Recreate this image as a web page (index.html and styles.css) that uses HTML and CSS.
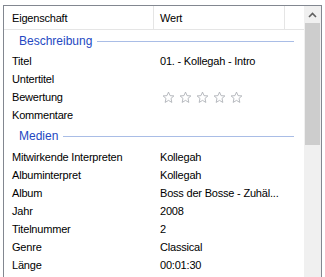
FILE: index.html
```html
<!DOCTYPE html>
<html lang="de">
<head>
  <meta charset="UTF-8">
  <title>Eigenschaften</title>
  <link rel="stylesheet" href="styles.css">
</head>
<body>
  <div class="list">
    <div class="content">
      <div class="header">
        <div class="col-name">Eigenschaft</div>
        <div class="col-value">Wert</div>
        <div class="col-rest"></div>
      </div>

      <div class="group first"><span>Beschreibung</span><i></i></div>
      <div class="row"><div class="name">Titel</div><div class="value">01. - Kollegah - Intro</div></div>
      <div class="row"><div class="name">Untertitel</div><div class="value"></div></div>
      <div class="row">
        <div class="name">Bewertung</div>
        <div class="value stars">
          <svg viewBox="0 0 14 14"><path d="M7 1.2 8.7 5 12.8 5.3 9.7 8 10.6 12.3 7 10.1 3.4 12.3 4.3 8 1.2 5.3 5.3 5Z"/></svg>
          <svg viewBox="0 0 14 14"><path d="M7 1.2 8.7 5 12.8 5.3 9.7 8 10.6 12.3 7 10.1 3.4 12.3 4.3 8 1.2 5.3 5.3 5Z"/></svg>
          <svg viewBox="0 0 14 14"><path d="M7 1.2 8.7 5 12.8 5.3 9.7 8 10.6 12.3 7 10.1 3.4 12.3 4.3 8 1.2 5.3 5.3 5Z"/></svg>
          <svg viewBox="0 0 14 14"><path d="M7 1.2 8.7 5 12.8 5.3 9.7 8 10.6 12.3 7 10.1 3.4 12.3 4.3 8 1.2 5.3 5.3 5Z"/></svg>
          <svg viewBox="0 0 14 14"><path d="M7 1.2 8.7 5 12.8 5.3 9.7 8 10.6 12.3 7 10.1 3.4 12.3 4.3 8 1.2 5.3 5.3 5Z"/></svg>
        </div>
      </div>
      <div class="row"><div class="name">Kommentare</div><div class="value"></div></div>

      <div class="group"><span>Medien</span><i></i></div>
      <div class="row"><div class="name">Mitwirkende Interpreten</div><div class="value">Kollegah</div></div>
      <div class="row"><div class="name">Albuminterpret</div><div class="value">Kollegah</div></div>
      <div class="row"><div class="name">Album</div><div class="value">Boss der Bosse - Zuhäl...</div></div>
      <div class="row"><div class="name">Jahr</div><div class="value">2008</div></div>
      <div class="row"><div class="name">Titelnummer</div><div class="value">2</div></div>
      <div class="row"><div class="name">Genre</div><div class="value">Classical</div></div>
      <div class="row"><div class="name">Länge</div><div class="value">00:01:30</div></div>
    </div>

    <div class="scrollbar">
      <div class="arrow">
        <svg viewBox="0 0 9 6"><path d="M1 5 4.5 1.5 8 5"/></svg>
      </div>
      <div class="thumb"></div>
    </div>
  </div>
</body>
</html>
```

FILE: styles.css
```css
body {
  margin: 0;
  background: #fff;
  font-family: "Liberation Sans", Arial, sans-serif;
  font-size: 11px;
  letter-spacing: -0.2px;
  color: #000;
  overflow: hidden;
}
.list {
  margin: 5px 0 0 3px;
  width: 317px;
  height: 290px;
  border: 1px solid #828790;
  display: flex;
}
.content {
  flex: 1;
}
.header {
  display: flex;
  height: 23px;
  border-bottom: 1px solid #e5e5e5;
}
.header > div {
  display: flex;
  align-items: center;
  border-right: 1px solid #e5e5e5;
}
.col-name {
  width: 141px;
  padding-left: 8px;
}
.col-value {
  width: 124px;
  padding-left: 6px;
}
.col-rest {
  flex: 1;
  border-right: none !important;
}
.group {
  display: flex;
  align-items: center;
  height: 22px;
  padding-left: 15px;
  padding-right: 10px;
  font-size: 12px;
  letter-spacing: 0;
  color: #2448c2;
}
.group:not(.first) {
  height: 24px;
}
.group i {
  flex: 1;
  height: 1px;
  margin-left: 5px;
  background: #a9bde6;
}
.row {
  display: flex;
  height: 18px;
  align-items: center;
}
.name {
  width: 142px;
  padding-left: 8px;
  white-space: nowrap;
}
.value {
  padding-left: 6px;
  white-space: nowrap;
}
.stars {
  display: flex;
  gap: 4px;
  padding-left: 8px;
}
.stars svg {
  width: 13px;
  height: 13px;
  fill: none;
  stroke: #a8acb2;
  stroke-width: 0.9;
  stroke-linejoin: round;
}
.scrollbar {
  width: 17px;
  background: #f0f0f0;
  display: flex;
  flex-direction: column;
  align-items: center;
}
.arrow {
  height: 17px;
  width: 17px;
  display: flex;
  align-items: center;
  justify-content: center;
}
.arrow svg {
  width: 9px;
  height: 6px;
  fill: none;
  stroke: #606060;
  stroke-width: 1.6;
}
.thumb {
  width: 15px;
  height: 122px;
  background: #cdcdcd;
}
```
